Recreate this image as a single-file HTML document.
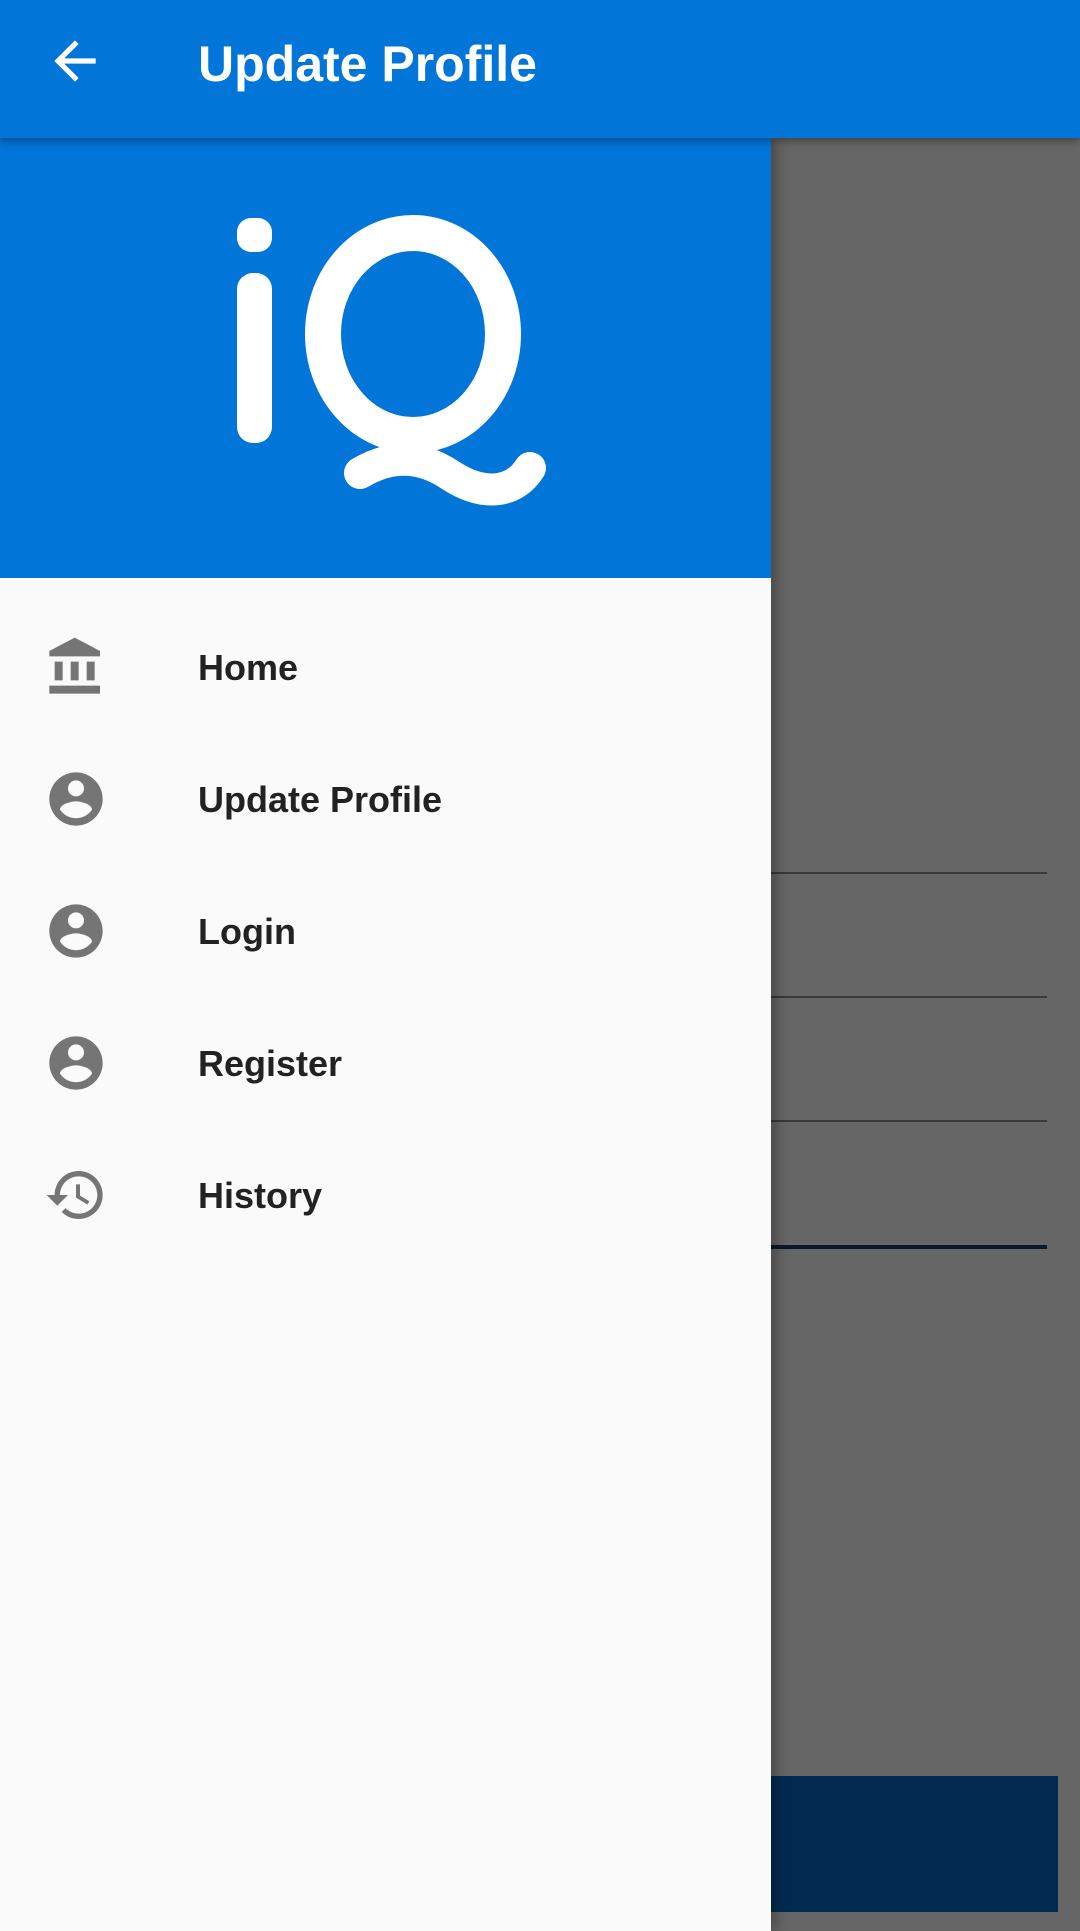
<!DOCTYPE html>
<html><head><style>
*{margin:0;padding:0;box-sizing:border-box}
body{width:1080px;height:1931px;overflow:hidden;background:#666;position:relative;font-family:"Liberation Sans",Roboto,sans-serif}
.bar{position:absolute;left:0;top:0;width:1080px;height:138px;background:#0175d8;box-shadow:0 3px 8px rgba(0,0,0,.35);z-index:3}
.bar .t{position:absolute;left:198px;top:35px;font-size:50px;color:#fff;font-weight:bold}
.line{position:absolute;left:771px;width:276px;height:2px;background:#3a3a3a}
.drawer{position:absolute;left:0;top:138px;width:771px;height:1793px;background:#fafafa;box-shadow:4px 0 14px rgba(0,0,0,.35);z-index:2}
.hdr{position:absolute;left:0;top:0;width:771px;height:440px;background:#0175d8}
.item{position:absolute;left:0;width:771px;height:132px}
.item svg{position:absolute;left:44px;top:34px}
.item span{position:absolute;left:198px;top:46px;font-size:36px;font-weight:bold;color:#222}
</style></head><body>
<div class="bar">
<svg style="position:absolute;left:44px;top:30px" width="62" height="62" viewBox="0 0 24 24"><path fill="#fff" d="M20 11H7.830l5.59-5.59L12 4l-8 8 8 8 1.41-1.41L7.83 13H20v-2z"/></svg>
<div class="t">Update Profile</div>
</div>
<div class="line" style="top:872px"></div>
<div class="line" style="top:996px"></div>
<div class="line" style="top:1120px"></div>
<div class="line" style="top:1245px;height:4px;background:#0a1a2a"></div>
<div style="position:absolute;left:771px;top:1776px;width:287px;height:136px;background:#022a50"></div>
<div class="drawer">
<div class="hdr">
<svg width="771" height="440" viewBox="0 138 771 440">
<rect x="237" y="218" width="35" height="34" rx="14" fill="#fff"/>
<rect x="237" y="273" width="35" height="170" rx="16" fill="#fff"/>
<ellipse cx="413" cy="334" rx="90" ry="101" fill="none" stroke="#fff" stroke-width="36"/>
<path d="M360 473 C390 455,420 455,450 475 C485 498,515 492,530 468" fill="none" stroke="#fff" stroke-width="32" stroke-linecap="round"/>
</svg>
</div>
<div class="item" style="top:463px"><svg width="64" height="64" viewBox="0 0 24 24"><path fill="#757575" d="M4 10v7h3v-7H4zm6 0v7h3v-7h-3zM2 22h19v-3H2v3zm14-12v7h3v-7h-3zm-4.5-9L2 6v2h19V6l-9.5-5z"/></svg><span>Home</span></div>
<div class="item" style="top:595px"><svg width="64" height="64" viewBox="0 0 24 24"><path fill="#757575" d="M12 2C6.48 2 2 6.48 2 12s4.48 10 10 10 10-4.48 10-10S17.52 2 12 2zm0 3c1.66 0 3 1.34 3 3s-1.34 3-3 3-3-1.34-3-3 1.34-3 3-3zm0 14.2c-2.5 0-4.71-1.28-6-3.22.03-1.99 4-3.08 6-3.08 1.99 0 5.97 1.09 6 3.08-1.290 1.94-3.5 3.22-6 3.22z"/></svg><span>Update Profile</span></div>
<div class="item" style="top:727px"><svg width="64" height="64" viewBox="0 0 24 24"><path fill="#757575" d="M12 2C6.48 2 2 6.48 2 12s4.48 10 10 10 10-4.48 10-10S17.52 2 12 2zm0 3c1.66 0 3 1.34 3 3s-1.34 3-3 3-3-1.34-3-3 1.34-3 3-3zm0 14.2c-2.5 0-4.71-1.28-6-3.22.03-1.99 4-3.08 6-3.08 1.99 0 5.97 1.09 6 3.08-1.29 1.94-3.5 3.22-6 3.22z"/></svg><span>Login</span></div>
<div class="item" style="top:859px"><svg width="64" height="64" viewBox="0 0 24 24"><path fill="#757575" d="M12 2C6.48 2 2 6.48 2 12s4.48 10 10 10 10-4.48 10-10S17.52 2 12 2zm0 3c1.66 0 3 1.34 3 3s-1.34 3-3 3-3-1.34-3-3 1.34-3 3-3zm0 14.2c-2.5 0-4.71-1.28-6-3.22.03-1.99 4-3.08 6-3.08 1.99 0 5.97 1.09 6 3.08-1.29 1.94-3.5 3.22-6 3.22z"/></svg><span>Register</span></div>
<div class="item" style="top:991px"><svg width="64" height="64" viewBox="0 0 24 24"><path fill="#757575" d="M13 3c-4.97 0-9 4.03-9 9H1l3.89 3.89.07.14L9 12H6c0-3.87 3.13-7 7-7s7 3.13 7 7-3.13 7-7 7c-1.93 0-3.68-.79-4.94-2.06l-1.42 1.42C8.27 19.99 10.51 21 13 21c4.97 0 9-4.030 9-9s-4.03-9-9-9zm-1 5v5l4.28 2.54.72-1.21-3.5-2.08V8H12z"/></svg><span>History</span></div>
</div>
</body></html>
